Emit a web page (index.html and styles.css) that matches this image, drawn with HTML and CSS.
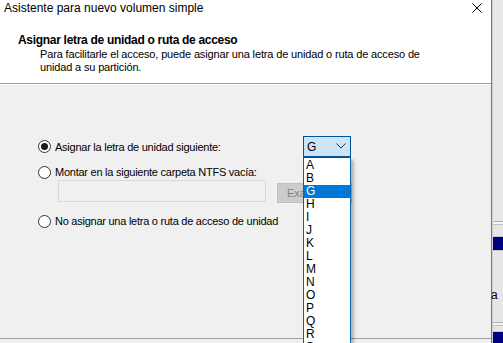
FILE: index.html
```html
<!DOCTYPE html>
<html lang="es">
<head>
    <meta charset="UTF-8">
    <meta name="viewport" content="width=device-width, initial-scale=1.0">
    <title>Asistente para nuevo volumen simple</title>
    <link rel="stylesheet" href="styles.css">
</head>
<body>
    <div class="screen">
        <div class="dialog">
            <div class="top">
                <div class="titlebar">
                    <span class="title">Asistente para nuevo volumen simple</span>
                    <svg class="close" width="10" height="10" viewBox="0 0 10 10">
                        <path d="M0.5 0.5 L9.5 9.5 M9.5 0.5 L0.5 9.5" stroke="#000" stroke-width="1"/>
                    </svg>
                </div>
                <div class="heading">
                    <h1>Asignar letra de unidad o ruta de acceso</h1>
                    <p>Para facilitarle el acceso, puede asignar una letra de unidad o ruta de acceso de unidad a su partición.</p>
                </div>
            </div>

            <div class="content">
                <div class="options">
                    <div class="row first">
                        <label class="radio checked"><span class="dot"></span>Asignar la letra de unidad siguiente:</label>
                        <div class="combo">
                            <div class="combo-box">
                                <span>G</span>
                                <svg width="10" height="6" viewBox="0 0 10 6">
                                    <path d="M0.5 0.5 L5 5 L9.5 0.5" fill="none" stroke="#333" stroke-width="1"/>
                                </svg>
                            </div>
                            <ul class="combo-list">
                                <li>A</li>
                                <li>B</li>
                                <li class="selected">G</li>
                                <li>H</li>
                                <li>I</li>
                                <li>J</li>
                                <li>K</li>
                                <li>L</li>
                                <li>M</li>
                                <li>N</li>
                                <li>O</li>
                                <li>P</li>
                                <li>Q</li>
                                <li>R</li>
                                <li>S</li>
                            </ul>
                        </div>
                    </div>

                    <div class="row">
                        <label class="radio"><span class="dot"></span>Montar en la siguiente carpeta NTFS vacía:</label>
                    </div>
                    <div class="folder">
                        <div class="path-field"></div>
                        <button class="browse" disabled>Examinar...</button>
                    </div>

                    <div class="row last">
                        <label class="radio"><span class="dot"></span>No asignar una letra o ruta de acceso de unidad</label>
                    </div>
                </div>
            </div>
            <div class="footer"></div>
        </div>

        <div class="behind">
            <div class="strip s1"></div>
            <div class="strip line"></div>
            <div class="strip s2"></div>
            <div class="strip navy"></div>
            <div class="strip s3"></div>
            <div class="strip txt">a</div>
            <div class="strip s4"></div>
            <div class="strip line"></div>
            <div class="strip s5"></div>
            <div class="strip navy"></div>
        </div>
    </div>
</body>
</html>
```

FILE: styles.css
```css
body {
    margin: 0;
    background-color: #f0f0f0;
    font-family: 'Liberation Sans', Arial, sans-serif;
    font-size: 12px;
    color: #000;
}
.screen {
    display: flex;
    width: 503px;
    height: 343px;
    overflow: hidden;
}
.dialog {
    width: 492px;
    border-right: 1px solid #7a7a7a;
    display: flex;
    flex-direction: column;
    background-color: #f0f0f0;
}
.top {
    background-color: #fff;
    height: 83px;
    border-bottom: 1px solid #a0a0a0;
}
.titlebar {
    display: flex;
    justify-content: space-between;
    align-items: flex-start;
    height: 28px;
    padding: 1px 9px 0 4px;
    box-sizing: border-box;
}
.title {
    line-height: 14px;
}
.close {
    margin-top: 2px;
}
.heading {
    padding-left: 18px;
}
.heading h1 {
    margin: 4px 0 0;
    font-size: 12px;
    font-weight: bold;
    line-height: 16px;
    letter-spacing: -0.3px;
}
.heading p {
    margin: 0 0 0 22px;
    width: 400px;
    font-size: 11px;
    letter-spacing: -0.15px;
    line-height: 13px;
}
.content {
    flex: 1;
    border-top: 1px solid #fff;
}
.options {
    padding: 51px 0 0 38px;
}
.row {
    display: flex;
    align-items: center;
    height: 16px;
}
.row.first {
    height: 21px;
    margin-bottom: 7px;
}
.radio {
    display: flex;
    align-items: center;
    font-size: 11px;
    letter-spacing: -0.25px;
}
.dot {
    width: 11px;
    height: 11px;
    border: 1px solid #333;
    border-radius: 50%;
    background-color: #fff;
    margin-right: 4px;
    display: flex;
    justify-content: center;
    align-items: center;
}
.checked .dot::after {
    content: "";
    width: 7px;
    height: 7px;
    border-radius: 50%;
    background-color: #1a1a1a;
}
.combo {
    position: relative;
    margin-left: auto;
    margin-right: 140px;
}
.combo-box {
    width: 48px;
    height: 21px;
    box-sizing: border-box;
    border: 1px solid #005499;
    background-color: #cce4f7;
    display: flex;
    justify-content: space-between;
    align-items: center;
    padding: 0 4px 0 3px;
    font-size: 12px;
}
.combo-box svg {
    margin-bottom: 1px;
}
.combo-list {
    position: absolute;
    top: 21px;
    left: 0;
    width: 48px;
    box-sizing: border-box;
    margin: 0;
    padding: 1px 0 0;
    list-style: none;
    background-color: #fff;
    border: 1px solid #0a64ad;
    border-top-color: #005499;
    box-shadow: 3px 3px 3px rgba(0,0,0,0.25);
    z-index: 2;
}
.combo-list li {
    height: 13px;
    line-height: 13px;
    padding-left: 2px;
    font-size: 12px;
}
.combo-list .selected {
    background-color: #0078d7;
    color: #fff;
}
.folder {
    display: flex;
    align-items: flex-start;
    gap: 11px;
    padding-left: 20px;
}
.path-field {
    width: 208px;
    height: 22px;
    box-sizing: border-box;
    border: 1px solid #d9d9d9;
    background-color: #f0f0f0;
}
.browse {
    width: 75px;
    height: 20px;
    margin-top: 3px;
    border: 1px solid #bfbfbf;
    background-color: #cccccc;
    color: #838383;
    font-family: 'Liberation Sans', Arial, sans-serif;
    font-size: 11px;
    text-align: left;
    padding-left: 9px;
}
.row.last {
    margin-top: 10px;
}
.footer {
    height: 4px;
    border-top: 1px solid #a0a0a0;
}
.behind {
    width: 10px;
    display: flex;
    flex-direction: column;
    background-color: #e6e6e6;
    border-left: 1px solid #d0d0d0;
}
.strip {
    flex: none;
}
.s1 {
    height: 221px;
    background-color: #e8e8e8;
}
.line {
    height: 4px;
    border-top: 1px solid #b0b0b0;
    border-bottom: 1px solid #c0c0c0;
    box-sizing: border-box;
    background-color: #f5f5f5;
}
.s2 {
    height: 12px;
    border-bottom: 1px solid #c8c8c8;
    box-sizing: border-box;
}
.navy {
    height: 13px;
    background-color: #000080;
}
.s3 {
    height: 38px;
    border-top: 1px solid #c8c8c8;
    box-sizing: border-box;
}
.txt {
    height: 14px;
    line-height: 14px;
    font-size: 12px;
    margin-left: -2px;
}
.s4 {
    height: 20px;
}
.s5 {
    height: 6px;
    border-bottom: 1px solid #c8c8c8;
    box-sizing: border-box;
}
```
